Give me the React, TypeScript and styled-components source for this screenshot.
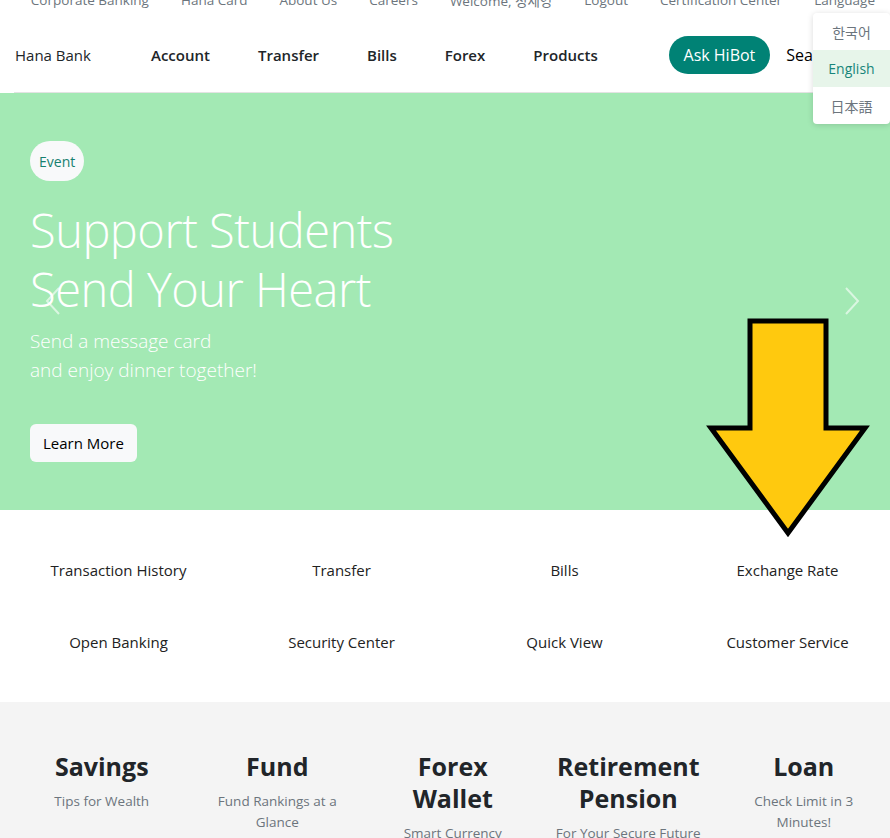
import React from "react";
import styled, { createGlobalStyle } from "styled-components";

const GlobalStyle = createGlobalStyle`
  html, body { margin: 0; padding: 0; background: #ffffff; overflow: hidden; }
  body { font-family: "Open Sans", "Noto Sans", "Noto Sans CJK KR", sans-serif; color: #212529; }
  * { box-sizing: border-box; }
`;

const Page = styled.div`
  position: relative;
  margin-top: -18px;
`;

const UtilityBar = styled.div`
  height: 36px;
  display: flex;
  justify-content: flex-end;
  align-items: center;
  gap: 32px;
  padding: 0 15px 0 30px;
  font-size: 13.5px;
  color: #6c757d;
`;

const UtilityLink = styled.span`
  white-space: nowrap;
`;

const Header = styled.header`
  height: 75px;
  margin-left: 14px;
  padding-right: 53px;
  display: flex;
  align-items: center;
  border-bottom: 1px solid #e3e3e3;
`;

const Logo = styled.div`
  font-size: 15px;
  color: #212529;
  margin-left: 1px;
  width: 136px;
`;

const Nav = styled.nav`
  display: flex;
  gap: 48px;
`;

const NavItem = styled.span`
  font-size: 15px;
  font-weight: 600;
  color: #212529;
`;

const RightGroup = styled.div`
  margin-left: auto;
  display: flex;
  align-items: center;
  gap: 16px;
`;

const HiBotButton = styled.button`
  height: 38px;
  padding: 0 15px;
  border: none;
  border-radius: 19px;
  background: #008275;
  color: #ffffff;
  font-family: inherit;
  font-size: 16px;
`;

const SearchLink = styled.span`
  font-size: 16px;
  color: #000;
`;

const LangMenu = styled.ul`
  position: absolute;
  top: 31px;
  right: 0;
  width: 77px;
  margin: 0;
  padding: 0;
  list-style: none;
  background: #fff;
  border-radius: 4px;
  box-shadow: 0 1px 6px rgba(0, 0, 0, 0.15);
  overflow: hidden;
  z-index: 10;
`;

const LangItem = styled.li<{ $active?: boolean }>`
  height: 37px;
  display: flex;
  align-items: center;
  justify-content: center;
  font-size: 14px;
  color: ${(p) => (p.$active ? "#17857a" : "#6c757d")};
  background: ${(p) => (p.$active ? "#e7f5ea" : "transparent")};
`;

const Hero = styled.section`
  position: relative;
  height: 417px;
  background: #a3e9b4;
  padding: 48px 30px 0;
  color: #fff;
`;

const Pill = styled.span`
  display: inline-flex;
  align-items: center;
  height: 40px;
  padding: 0 9px;
  border-radius: 20px;
  background: #f8f9fa;
  color: #16806f;
  font-size: 14px;
`;

const HeroTitle = styled.h1`
  margin: 20px 0 0;
  font-size: 47px;
  line-height: 59px;
  font-weight: 300;
  letter-spacing: -0.5px;
`;

const HeroText = styled.p`
  margin: 8px 0 0;
  font-size: 19px;
  line-height: 29px;
  font-weight: 300;
`;

const LearnButton = styled.button`
  margin-top: 39px;
  height: 38px;
  padding: 0 13px;
  border: none;
  border-radius: 6px;
  background: #f8f9fa;
  color: #000;
  font-family: inherit;
  font-size: 15px;
`;

const Chevron = styled.svg<{ $side: "left" | "right" }>`
  position: absolute;
  top: 194px;
  ${(p) => (p.$side === "left" ? "left: 45px;" : "right: 30px;")}
`;

const QuickMenu = styled.section`
  padding: 24px 0 24px 7px;
  display: grid;
  grid-template-columns: repeat(4, 223px);
`;

const QuickItem = styled.div`
  height: 72px;
  display: flex;
  align-items: center;
  justify-content: center;
  font-size: 15px;
  color: #222;
`;

const Products = styled.section`
  background: #f4f4f4;
  padding: 48px 0 40px 14px;
  display: grid;
  grid-template-columns: repeat(5, 175.5px);
  align-items: start;
`;

const ProductCard = styled.div`
  padding: 0 15px;
  text-align: center;
`;

const ProductTitle = styled.h3`
  margin: 0;
  font-size: 25px;
  line-height: 32px;
  font-weight: 700;
  color: #212529;
`;

const ProductDesc = styled.p`
  margin: 9px 0 0;
  font-size: 13.5px;
  line-height: 21px;
  color: #6c757d;
`;

const Annotation = styled.svg`
  position: absolute;
  left: 700px;
  top: 336px;
  z-index: 5;
`;

const utilityLinks = [
  "Corporate Banking",
  "Hana Card",
  "About Us",
  "Careers",
  "Welcome, 정세영",
  "Logout",
  "Certification Center",
  "Language",
];

const navItems = ["Account", "Transfer", "Bills", "Forex", "Products"];

const quickItems = [
  "Transaction History",
  "Transfer",
  "Bills",
  "Exchange Rate",
  "Open Banking",
  "Security Center",
  "Quick View",
  "Customer Service",
];

const products = [
  { title: "Savings", desc: "Tips for Wealth" },
  { title: "Fund", desc: "Fund Rankings at a Glance" },
  { title: "Forex Wallet", desc: "Smart Currency Exchange" },
  { title: "Retirement Pension", desc: "For Your Secure Future" },
  { title: "Loan", desc: "Check Limit in 3 Minutes!" },
];

export default function App() {
  return (
    <>
      <GlobalStyle />
      <Page>
        <UtilityBar>
          {utilityLinks.map((l) => (
            <UtilityLink key={l}>{l}</UtilityLink>
          ))}
        </UtilityBar>
        <LangMenu>
          <LangItem>한국어</LangItem>
          <LangItem $active>English</LangItem>
          <LangItem>日本語</LangItem>
        </LangMenu>
        <Header>
          <Logo>Hana Bank</Logo>
          <Nav>
            {navItems.map((n) => (
              <NavItem key={n}>{n}</NavItem>
            ))}
          </Nav>
          <RightGroup>
            <HiBotButton>Ask HiBot</HiBotButton>
            <SearchLink>Search</SearchLink>
          </RightGroup>
        </Header>
        <Hero>
          <Pill>Event</Pill>
          <HeroTitle>
            Support Students
            <br />
            Send Your Heart
          </HeroTitle>
          <HeroText>
            Send a message card
            <br />
            and enjoy dinner together!
          </HeroText>
          <LearnButton>Learn More</LearnButton>
          <Chevron $side="left" width="16" height="28" viewBox="0 0 16 28">
            <polyline points="14,1 2,14 14,27" fill="none" stroke="rgba(255,255,255,0.6)" strokeWidth="2" />
          </Chevron>
          <Chevron $side="right" width="16" height="28" viewBox="0 0 16 28">
            <polyline points="2,1 14,14 2,27" fill="none" stroke="rgba(255,255,255,0.6)" strokeWidth="2" />
          </Chevron>
        </Hero>
        <QuickMenu>
          {quickItems.map((q) => (
            <QuickItem key={q}>{q}</QuickItem>
          ))}
        </QuickMenu>
        <Products>
          {products.map((p) => (
            <ProductCard key={p.title}>
              <ProductTitle>{p.title}</ProductTitle>
              <ProductDesc>{p.desc}</ProductDesc>
            </ProductCard>
          ))}
        </Products>
        <Annotation width="180" height="230" viewBox="0 0 180 230">
          <polygon
            points="50,3 126,3 126,110 165,110 88,215 11,110 50,110"
            fill="#ffc90e"
            stroke="#000"
            strokeWidth="5"
            strokeLinejoin="miter"
          />
        </Annotation>
      </Page>
    </>
  );
}
